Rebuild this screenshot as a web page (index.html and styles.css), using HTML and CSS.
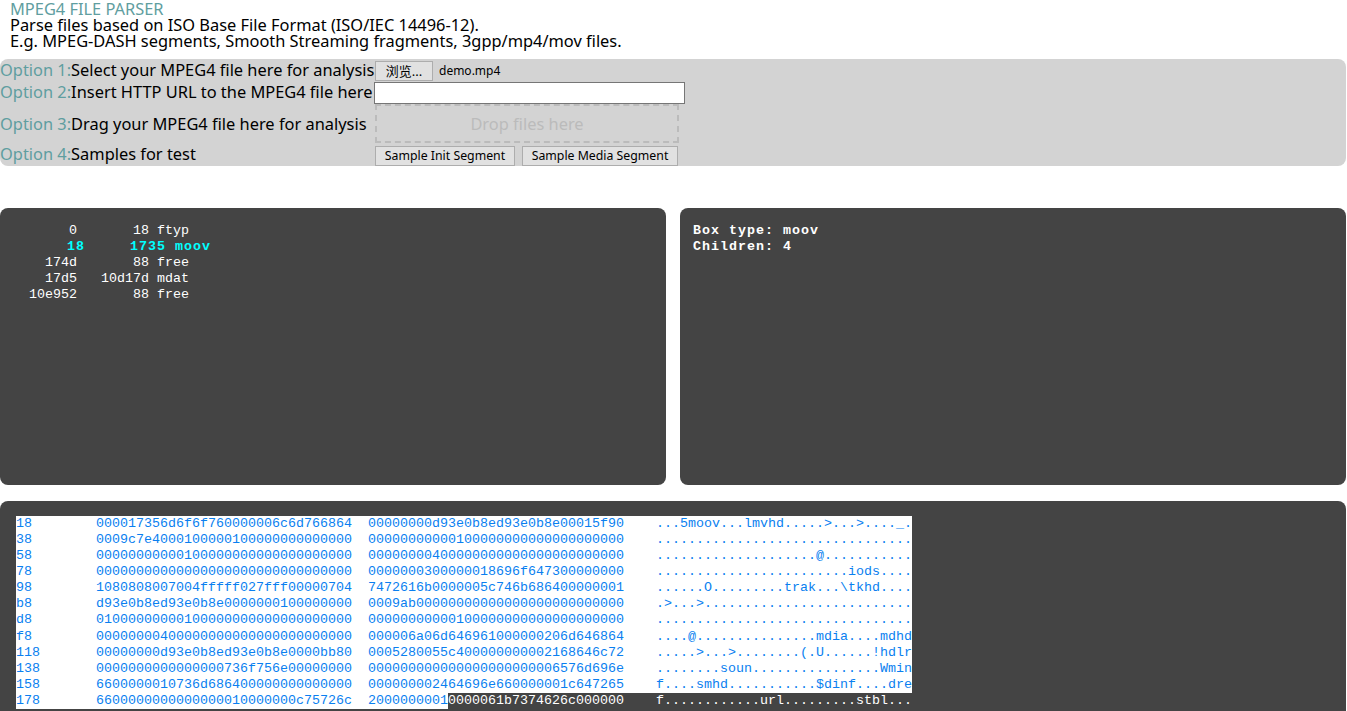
FILE: index.html
```html
<!DOCTYPE html>
<html lang="en">
<head>
<meta charset="utf-8">
<title>MPEG4 File Parser</title>
<link rel="stylesheet" href="styles.css">
</head>
<body>
<header class="intro">
  <div class="title">MPEG4 FILE PARSER</div>
  <div>Parse files based on ISO Base File Format (ISO/IEC 14496-12).</div>
  <div>E.g. MPEG-DASH segments, Smooth Streaming fragments, 3gpp/mp4/mov files.</div>
</header>
<section class="options">
  <div class="label row-a"><span class="opt">Option 1:</span>Select your MPEG4 file here for analysis</div>
  <div class="control row-a"><button class="btn browse" type="button">浏览...</button><span class="filename">demo.mp4</span></div>
  <div class="label row-b"><span class="opt">Option 2:</span>Insert HTTP URL to the MPEG4 file here</div>
  <div class="control row-b"><input class="url" type="text"></div>
  <div class="label row-c"><span class="opt">Option 3:</span>Drag your MPEG4 file here for analysis</div>
  <div class="control row-c"><div class="drop">Drop files here</div></div>
  <div class="label row-d"><span class="opt">Option 4:</span>Samples for test</div>
  <div class="control row-d"><button class="btn sample" type="button">Sample Init Segment</button><button class="btn sample" type="button">Sample Media Segment</button></div>
</section>
<section class="panes">
  <div class="pane tree"><pre class="mono">       0       18 ftyp
<b class="sel">      18     1735 moov</b>
    174d       88 free
    17d5   10d17d mdat
  10e952       88 free</pre></div>
  <div class="pane info"><pre class="mono strong">Box type: moov
Children: 4</pre></div>
</section>
<section class="hexpane">
  <div class="hex">
    <div class="hexrow"><span class="c-off">18</span><span class="c-hex">000017356d6f6f760000006c6d766864</span><span class="c-hex">00000000d93e0b8ed93e0b8e00015f90</span><span class="c-asc">...5moov...lmvhd.....&gt;...&gt;...._.</span></div>
    <div class="hexrow"><span class="c-off">38</span><span class="c-hex">0009c7e4000100000100000000000000</span><span class="c-hex">00000000000100000000000000000000</span><span class="c-asc">................................</span></div>
    <div class="hexrow"><span class="c-off">58</span><span class="c-hex">00000000000100000000000000000000</span><span class="c-hex">00000000400000000000000000000000</span><span class="c-asc">....................@...........</span></div>
    <div class="hexrow"><span class="c-off">78</span><span class="c-hex">00000000000000000000000000000000</span><span class="c-hex">0000000300000018696f647300000000</span><span class="c-asc">........................iods....</span></div>
    <div class="hexrow"><span class="c-off">98</span><span class="c-hex">1080808007004fffff027fff00000704</span><span class="c-hex">7472616b0000005c746b686400000001</span><span class="c-asc">......O.........trak...\tkhd....</span></div>
    <div class="hexrow"><span class="c-off">b8</span><span class="c-hex">d93e0b8ed93e0b8e0000000100000000</span><span class="c-hex">0009ab00000000000000000000000000</span><span class="c-asc">.&gt;...&gt;..........................</span></div>
    <div class="hexrow"><span class="c-off">d8</span><span class="c-hex">01000000000100000000000000000000</span><span class="c-hex">00000000000100000000000000000000</span><span class="c-asc">................................</span></div>
    <div class="hexrow"><span class="c-off">f8</span><span class="c-hex">00000000400000000000000000000000</span><span class="c-hex">000006a06d646961000000206d646864</span><span class="c-asc">....@...............mdia....mdhd</span></div>
    <div class="hexrow"><span class="c-off">118</span><span class="c-hex">00000000d93e0b8ed93e0b8e0000bb80</span><span class="c-hex">0005280055c400000000002168646c72</span><span class="c-asc">.....&gt;...&gt;........(.U......!hdlr</span></div>
    <div class="hexrow"><span class="c-off">138</span><span class="c-hex">0000000000000000736f756e00000000</span><span class="c-hex">000000000000000000000006576d696e</span><span class="c-asc">........soun................Wmin</span></div>
    <div class="hexrow"><span class="c-off">158</span><span class="c-hex">6600000010736d686400000000000000</span><span class="c-hex">000000002464696e660000001c647265</span><span class="c-asc">f....smhd...........$dinf....dre</span></div>
    <div class="hexrow last"><span class="c-off">178</span><span class="c-hex">6600000000000000010000000c75726c</span><span class="c-hex">2000000001<span class="end">0000061b7374626c000000</span></span><span class="c-asc end">f............url.........stbl...</span></div>
  </div>
</section>
</body>
</html>
```
FILE: styles.css
```css
* { box-sizing: border-box; }
html, body { margin: 0; padding: 0; }
body {
  width: 1346px;
  height: 711px;
  overflow: hidden;
  background: #fff;
  color: #000;
  font-family: "Noto Sans", "Noto Sans CJK SC", sans-serif;
  font-size: 16.4px;
  line-height: 16px;
}
.intro { padding: 1px 0 0 10px; height: 59px; }
.title { color: #5f9ea0; }
.options {
  display: grid;
  grid-template-columns: 373px 1fr;
  grid-template-rows: 22px 22px 41px 22px;
  background: #d3d3d3;
  border-radius: 8px;
  height: 107px;
}
.label { display: flex; align-items: center; white-space: nowrap; }
.label.row-d { padding-bottom: 2px; }
.opt { color: #5f9ea0; }
.control { display: flex; align-items: center; }
.btn {
  height: 20px;
  padding: 0 8px;
  background: #e1e1e1;
  border: 1px solid #adadad;
  border-radius: 0;
  color: #000;
  font-family: "Noto Sans", "Noto Sans CJK SC", sans-serif;
  font-size: 12.3px;
  line-height: 18px;
}
.browse { margin: 2px 0 0 2px; width: 58px; font-size: 13px; padding: 0 4px; }
.filename { margin: 2px 0 0 6px; font-size: 12px; }
.url {
  width: 311px;
  height: 22px;
  margin: 1px 0 0 1px;
  background: #fff;
  border: 1px solid #767676;
  padding: 1px 2px;
}
.drop {
  display: flex;
  align-items: center;
  justify-content: center;
  width: 304px;
  height: 39px;
  margin: 0 0 0 2px;
  border: 2px dashed #bbb;
  color: #bbb;
}
.sample:first-child { margin: 1px 0 0 2px; width: 140px; }
.sample + .sample { margin: 1px 0 0 7px; width: 156px; }
.panes {
  display: grid;
  grid-template-columns: 666px 666px;
  column-gap: 14px;
  margin-top: 42px;
}
.pane {
  height: 277px;
  background: #444;
  border-radius: 8px;
  padding: 15px 13px;
}
.mono, .hex {
  margin: 0;
  font-family: "Liberation Mono", monospace;
  font-size: 13.333px;
  line-height: 16px;
}
.mono { color: #fff; }
.sel { color: #0ff; font-weight: bold; letter-spacing: 1px; }
.strong { font-weight: bold; letter-spacing: 1px; }
.hexpane {
  margin-top: 16px;
  height: 210px;
  background: #444;
  border-radius: 8px 8px 0 0;
  padding: 15px 16px 0;
  overflow: hidden;
}
.hex { width: 896px; color: #0a7ff0; }
.hexrow { display: flex; height: 16.09px; background: #fff; white-space: pre; }
.hexrow.last { background: linear-gradient(to right, #fff 432px, #444 432px); }
.c-off { width: 80px; }
.c-hex { width: 256px; margin-right: 16px; }
.c-hex + .c-hex { margin-right: 32px; }
.c-asc { width: 256px; }
.end { color: #fff; }
```
